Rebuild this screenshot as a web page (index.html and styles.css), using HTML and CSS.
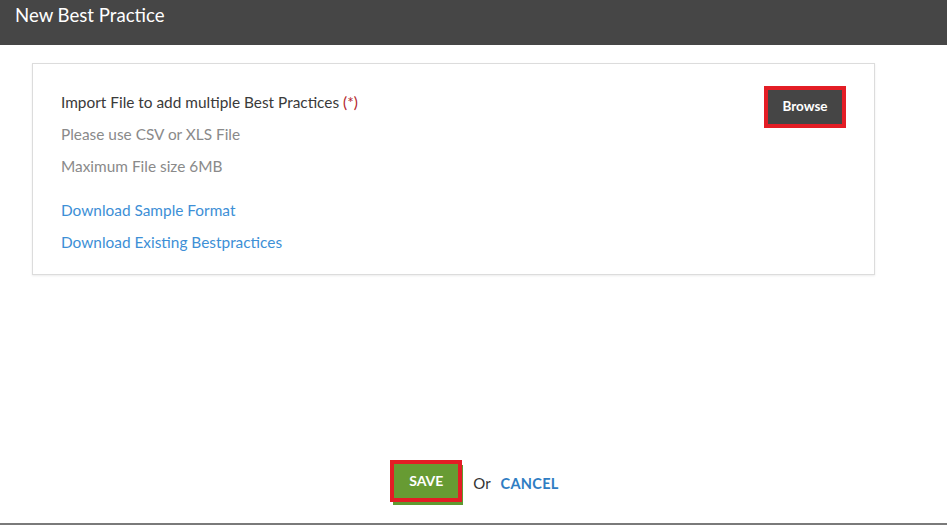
FILE: index.html
```html
<!DOCTYPE html>
<html>
<head>
<meta charset="utf-8">
<link rel="stylesheet" href="styles.css">
</head>
<body>
<div class="page">
  <header class="header">
    <h1 class="title">New Best Practice</h1>
  </header>
  <main class="content">
    <section class="card">
      <div class="card-text">
        <p class="line line-main">Import File to add multiple Best Practices <span class="req">(*)</span></p>
        <p class="line line-muted">Please use CSV or XLS File</p>
        <p class="line line-muted">Maximum File size 6MB</p>
        <div class="links">
          <a class="line link" href="#">Download Sample Format</a>
          <a class="line link" href="#">Download Existing Bestpractices</a>
        </div>
      </div>
      <div class="browse-wrap">
        <button class="btn-browse">Browse</button>
      </div>
    </section>
  </main>
  <footer class="actions">
    <div class="save-wrap"><button class="btn-save">SAVE</button></div>
    <span class="or">Or</span>
    <a class="cancel" href="#">CANCEL</a>
  </footer>
  <div class="bottom-line"></div>
</div>
</body>
</html>
```

FILE: styles.css
```css
* { box-sizing: border-box; }
html, body { margin: 0; padding: 0; }
body {
  background: #fff;
  font-family: Lato, "Open Sans", sans-serif;
  color: #333;
}
.page {
  width: 947px;
  height: 525px;
  display: flex;
  flex-direction: column;
  overflow: hidden;
}
.header {
  height: 45px;
  background: #464646;
  padding: 3px 15px 0;
  flex: none;
}
.title {
  margin: 0;
  font-size: 18.6px;
  font-weight: 400;
  color: #fff;
  line-height: 24px;
}
.content {
  flex: 1;
  padding: 18px 72px 0 32px;
}
.card {
  border: 1px solid #dcdcdc;
  box-shadow: 0 1px 2px rgba(0,0,0,0.08);
  height: 212px;
  display: flex;
  justify-content: space-between;
  padding: 22px 28px 16px 28px;
}
.card-text {
  display: flex;
  flex-direction: column;
}
.line {
  margin: 0;
  font-size: 15.4px;
  line-height: 32px;
  display: block;
}
.line-main { color: #3a3a3a; }
.req { color: #b3262b; }
.line-muted { color: #8a8a8a; }
.links {
  margin-top: 12px;
  display: flex;
  flex-direction: column;
}
.link {
  color: #3d8fd6;
  text-decoration: none;
}
.browse-wrap {
  border: 4px solid #e31d25;
  width: 82px;
  height: 42px;
  padding: 0;
  margin-top: 0;
}
.btn-browse {
  width: 100%;
  height: 100%;
  border: none;
  background: #454545;
  color: #fff;
  font-family: Lato, sans-serif;
  font-weight: 700;
  font-size: 13.5px;
  cursor: pointer;
  padding: 0 0 2px;
}
.actions {
  flex: none;
  display: flex;
  justify-content: center;
  align-items: center;
  gap: 0;
  padding-left: 2px;
  margin-bottom: 21px;
}
.save-wrap {
  border: 4px solid #e31d25;
  width: 72px;
  height: 42px;
  box-shadow: 2px 4px 0 -1px #5f9a30;
}
.btn-save {
  width: 100%;
  height: 100%;
  border: none;
  background: #679b33;
  color: #fff;
  font-family: Lato, sans-serif;
  font-weight: 700;
  font-size: 14px;
  padding: 0 0 2px;
}
.or {
  margin-left: 11px;
  font-size: 15px;
  color: #333;
  padding-top: 4px;
}
.cancel {
  margin-left: 10px;
  font-size: 14.5px;
  font-weight: 700;
  color: #2f7dc3;
  text-decoration: none;
  letter-spacing: 0.3px;
  padding-top: 4px;
}
.bottom-line {
  flex: none;
  height: 2px;
  background: #7a7a7a;
}
```
